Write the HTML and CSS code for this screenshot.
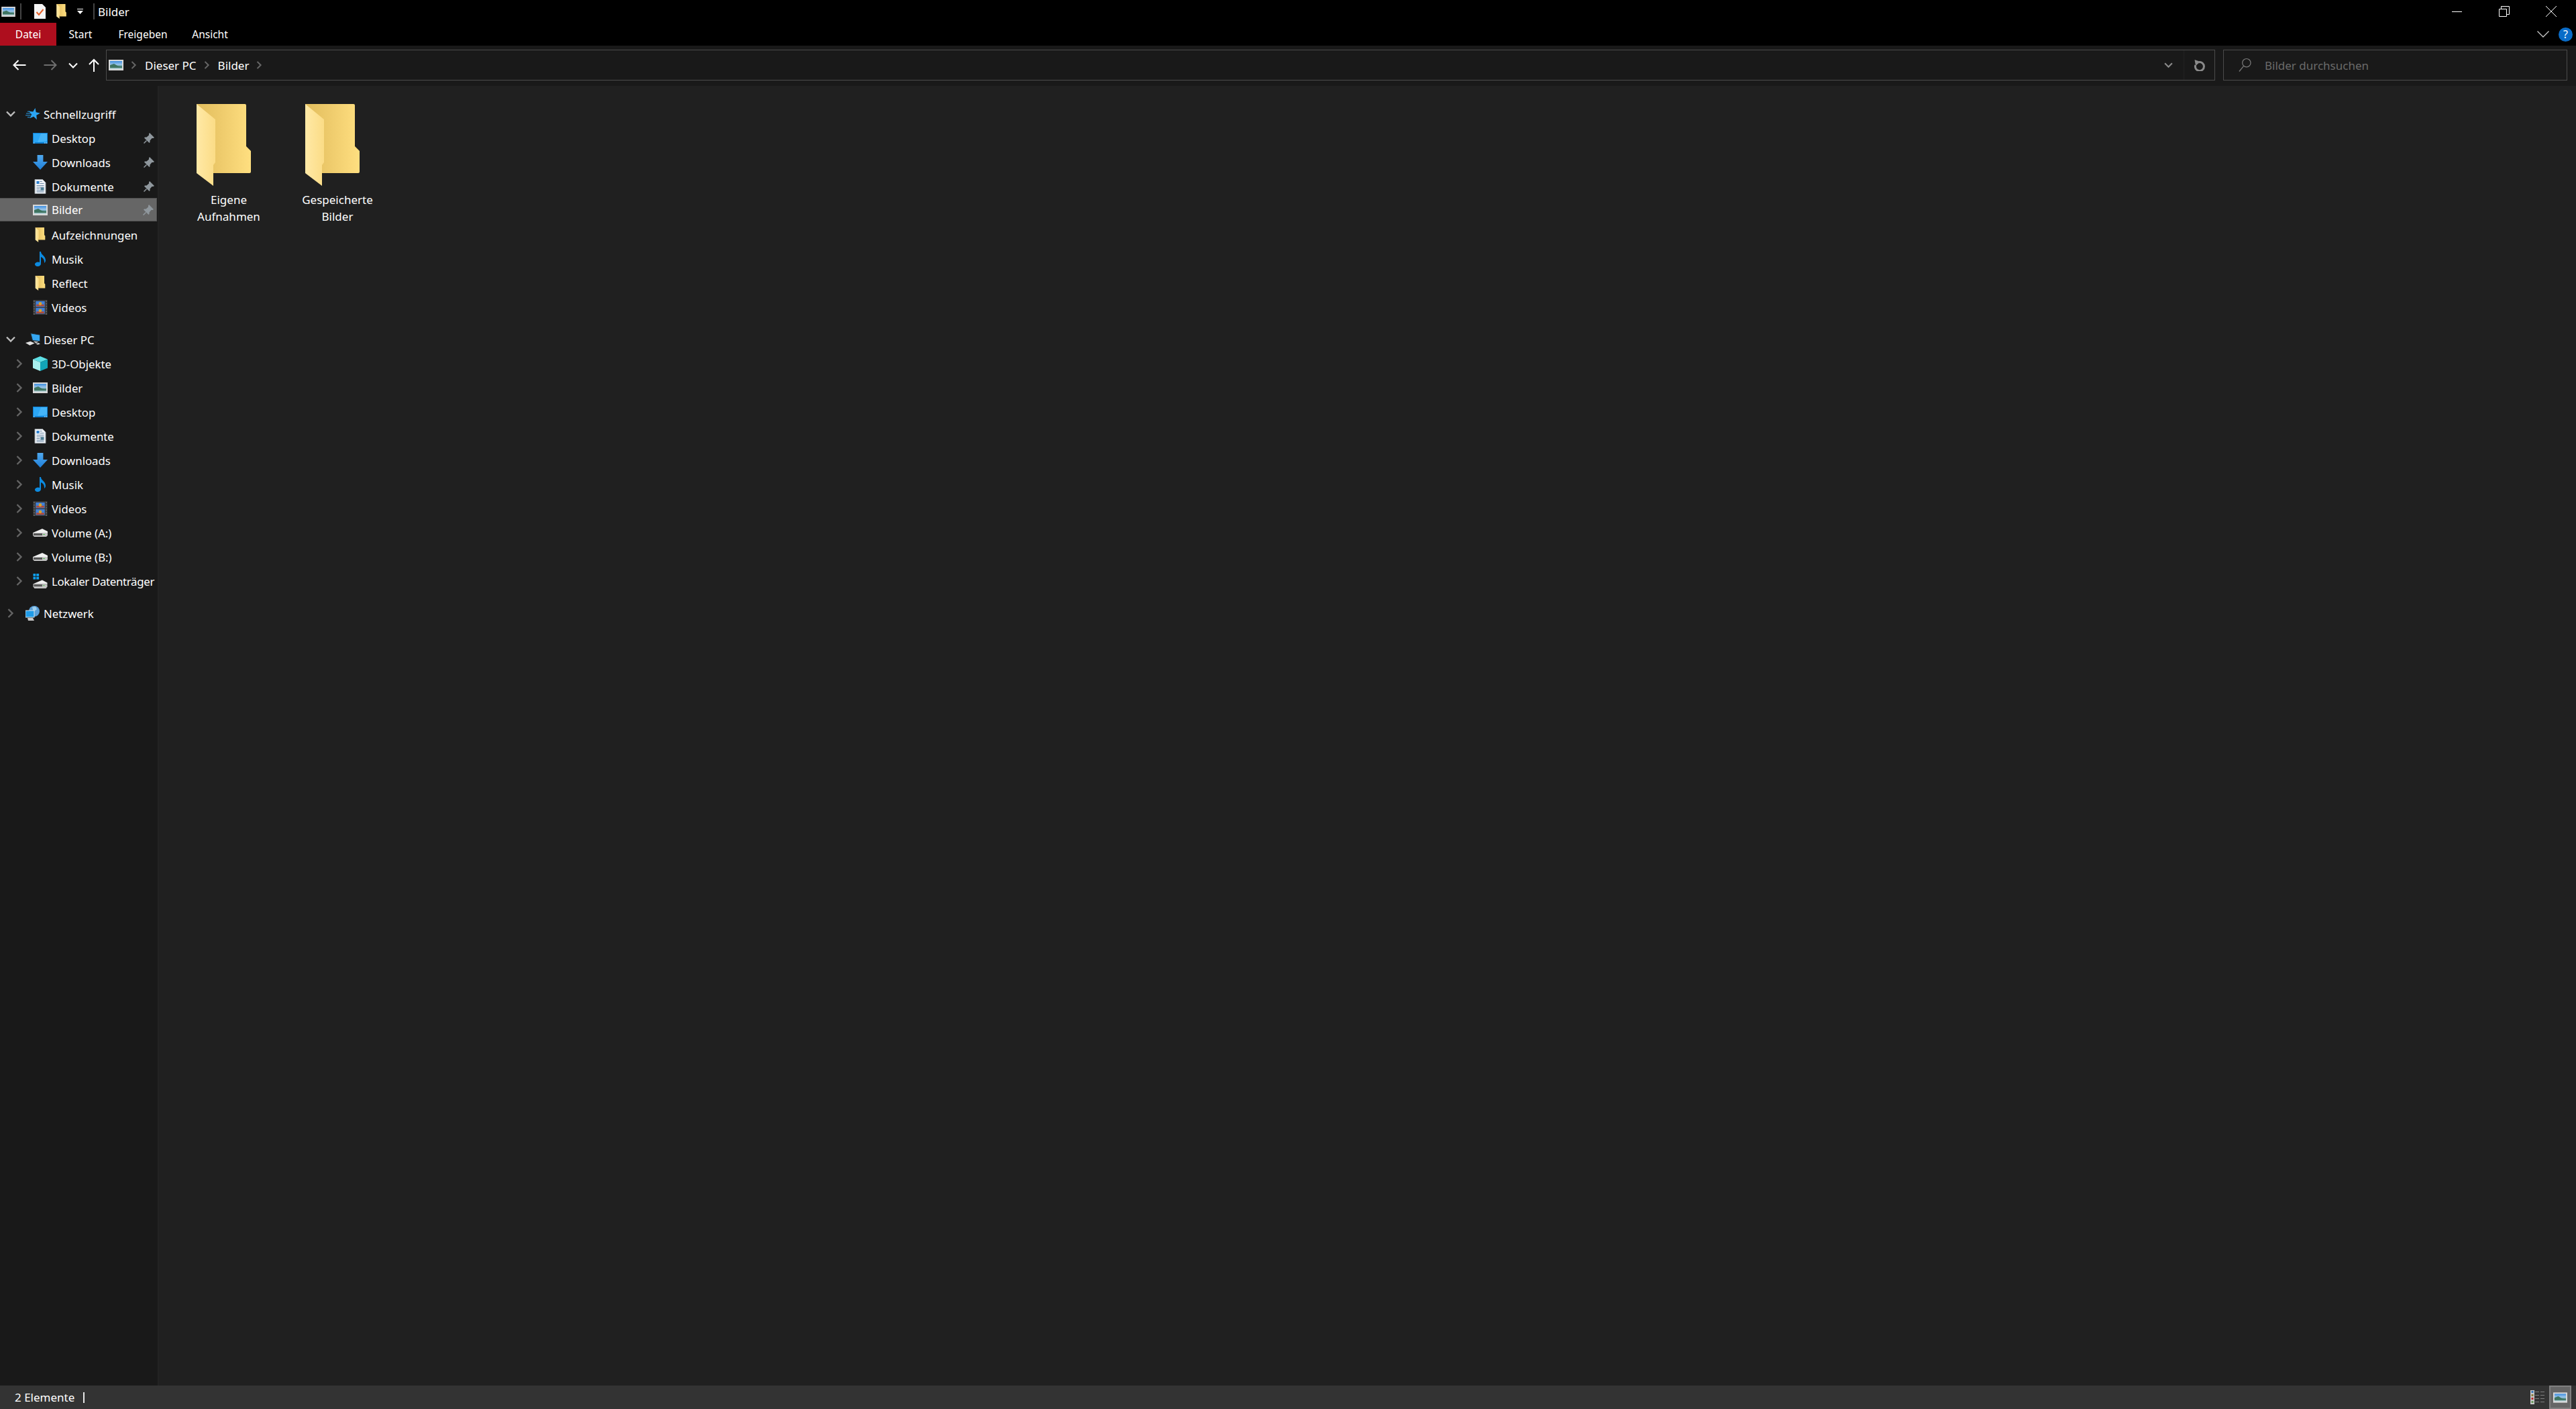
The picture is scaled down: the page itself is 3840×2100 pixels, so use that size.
FILE: index.html
```html
<!DOCTYPE html>
<html lang="de">
<head>
    <meta charset="utf-8">
    <title>Bilder</title>
    <link rel="stylesheet" href="styles.css">
</head>
<body>

<svg class="defs" width="0" height="0">
    <defs>
        <linearGradient id="skyGrad" x1="0" y1="0" x2="0" y2="1">
            <stop offset="0" stop-color="#3f8fe0"/>
            <stop offset="0.45" stop-color="#9cc6ea"/>
            <stop offset="0.7" stop-color="#3f7f72"/>
            <stop offset="1" stop-color="#cfe0ea"/>
        </linearGradient>
        <linearGradient id="backGrad" x1="0" y1="0" x2="1" y2="0">
            <stop offset="0" stop-color="#e2bd5c"/>
            <stop offset="0.45" stop-color="#eecb6c"/>
            <stop offset="1" stop-color="#ffdf80"/>
        </linearGradient>
        <linearGradient id="flapGrad" x1="0" y1="0" x2="1" y2="0">
            <stop offset="0" stop-color="#ffe9a6"/>
            <stop offset="1" stop-color="#fbdc86"/>
        </linearGradient>
        <linearGradient id="dlGrad" x1="0" y1="0" x2="0" y2="1">
            <stop offset="0" stop-color="#4fa8ee"/>
            <stop offset="1" stop-color="#1f7fd8"/>
        </linearGradient>

        <symbol id="i-folder" viewBox="0 0 81 122">
            <path fill="url(#backGrad)" d="M0 0H72a2 2 0 0 1 2 2V63L81 70V101a2 2 0 0 1-2 2H25Z"/>
            <path fill="url(#flapGrad)" d="M0 0L28 23V87L25 91V122L0 103Z"/>
        </symbol>
        <symbol id="i-pics" viewBox="0 0 22 16">
            <rect width="22" height="16" fill="#d8d8d8"/>
            <rect x="2" y="2" width="18" height="12" fill="url(#skyGrad)"/>
            <path fill="#3f7562" d="M2 8L8 6L14 9.500L20 10.500V12H2Z"/>
        </symbol>
        <symbol id="i-desktop" viewBox="0 0 22 16">
            <rect width="22" height="16" fill="#0f7fd0"/>
            <path fill="#2ba6f5" d="M1 1H21V14H1Z"/>
            <path fill="#45b4f8" d="M12 1H21V12L7 14Z"/>
            <rect x="1" y="14.500" width="1.500" height="1" fill="#cfeaff"/>
            <rect x="17" y="14.500" width="1.500" height="1" fill="#cfeaff"/>
            <rect x="19.500" y="14.500" width="1.500" height="1" fill="#cfeaff"/>
        </symbol>
        <symbol id="i-download" viewBox="0 0 20 20">
            <path fill="url(#dlGrad)" d="M6 0H14V9H20L10 20L0 9H6Z"/>
        </symbol>
        <symbol id="i-docs" viewBox="0 0 17 22">
            <path fill="#eef2f6" stroke="#9aa0a6" d="M.5.500H12L16.500 5V21.500H.5Z"/>
            <path fill="#2a7fd0" d="M3 3H7V7H3Z"/>
            <path stroke="#6d8aa8" d="M8 3.500H11M8 6.500H14M3 9.500H14M3 12H14M3 14.500H8M3 17H14M3 19H14"/>
            <rect x="9" y="12.500" width="5" height="4" fill="#4d7f96"/>
        </symbol>
        <symbol id="i-music" viewBox="0 0 16 22">
            <path fill="#0c8adf" d="M7 0H9C9 5 16 6 16 13C16 15 15 16 14 17C14.500 12 12 9 9 8V18C9 20.500 6.500 22 4 22C1.500 22 0 20.500 0 19C0 17 2.500 15.500 5 15.500C6 15.500 6.500 15.700 7 16Z"/>
        </symbol>
        <symbol id="i-video" viewBox="0 0 22 23">
            <rect width="22" height="23" fill="#3a3a3a"/>
            <rect x="4" y="2" width="14" height="9" fill="#3f80d8"/>
            <rect x="4" y="12.500" width="14" height="9" fill="#3f80d8"/>
            <rect x="5" y="7" width="12" height="3" fill="#b04a3a"/>
            <rect x="5" y="18" width="12" height="3" fill="#b04a3a"/>
            <circle cx="11" cy="6" r="2.500" fill="#d9a12c"/>
            <circle cx="11" cy="16.500" r="2.500" fill="#d9a12c"/>
            <path stroke="#888" stroke-dasharray="2 2" d="M1.500 1V23M20.500 1V23"/>
        </symbol>
        <symbol id="i-3d" viewBox="0 0 22 22">
            <path fill="#5fe0e6" d="M11 0L22 4.500L11 9L0 4.500Z"/>
            <path fill="#a8f0ee" d="M0 4.500L11 9V22L0 17.500Z"/>
            <path fill="#12a5b8" d="M22 4.500L11 9V22L22 17.500Z"/>
        </symbol>
        <symbol id="i-drive" viewBox="0 0 22 12">
            <path fill="#f0f0f0" d="M0 6L14 0L22 4V6Z"/>
            <path fill="#c4c4c4" d="M0 6H22V10L20 12H2L0 10Z"/>
            <rect x="1" y="7" width="13" height="3" fill="#555"/>
            <rect x="15" y="8" width="3" height="1" fill="#4fc04f"/>
        </symbol>
        <symbol id="i-star" viewBox="0 0 23 19">
            <path fill="#2ba6f5" d="M15.150 .14L16.380 6.720L22.900 8.180L17.030 11.380L17.660 18.040L12.800 13.440L6.670 16.100L9.540 10.060L5.110 5.040L11.750 5.900Z"/>
            <path stroke="#2ba6f5" d="M3 5.500H7M1 8.500H8M0 11.500H8M3 14.500H7"/>
        </symbol>
        <symbol id="i-pc" viewBox="0 0 24 21">
            <path fill="#35a7f2" stroke="#20343f" d="M8.500 .5L23.500 3V13.500L11.500 12Z"/>
            <path fill="#e0e0e0" d="M0 16L8 13.500L15 16.500L7 20Z"/>
            <path fill="#bdbdbd" d="M13 13L21 14L17 17Z"/>
            <path fill="#d8d8d8" d="M17 17.500L21 16L24 17.500L20 19Z"/>
        </symbol>
        <symbol id="i-net" viewBox="0 0 22 22">
            <circle cx="13" cy="8" r="8" fill="#5a9fd8"/>
            <path fill="#9fd0ee" d="M10 2L15 1L17 5L12 9Z"/>
            <rect x="0" y="7" width="13" height="10" fill="#1f9be8" stroke="#d8e4ec"/>
            <path fill="#c8c8c8" d="M3 18H11L13 22H4Z"/>
        </symbol>
        <symbol id="i-win" viewBox="0 0 22 23">
            <path fill="#0fa0ee" d="M0 0H4V4H0ZM5 0H9V4H5ZM0 5H4V9H0ZM5 5H9V9H5Z"/>
            <path fill="#f0f0f0" d="M0 16L14 10L22 14V16Z"/>
            <path fill="#c4c4c4" d="M0 16H22V20L20 23H2L0 20Z"/>
            <rect x="1" y="17" width="13" height="3" fill="#555"/>
            <rect x="15" y="18" width="3" height="1" fill="#4fc04f"/>
        </symbol>
        <symbol id="i-pin" viewBox="0 0 16 16">
            <path fill="#8f979d" d="M9 0L16 7L14.500 8H12.500L9.500 11.500V14L8.500 15L1 7.500L2 6.500H4.500L8 3.500V1.500Z"/>
            <path stroke="#8f979d" stroke-width="1.500" d="M4.500 11.500L.5 15.500"/>
        </symbol>
        <symbol id="i-open" viewBox="0 0 14 10">
            <path fill="none" stroke="currentColor" stroke-width="2.400" d="M1 1.500L7 7.500L13 1.500"/>
        </symbol>
        <symbol id="i-closed" viewBox="0 0 10 14">
            <path fill="none" stroke="currentColor" stroke-width="2.400" d="M1.500 1L7.500 7L1.500 13"/>
        </symbol>
    </defs>
</svg>

<div class="titlebar">
    <svg class="qa-pic"><use href="#i-pics"/></svg>
    <span class="qa-sep"></span>
    <svg class="qa-note" viewBox="0 0 17 22">
        <path fill="#f4f4f4" d="M0 0H12L17 5V22H0Z"/>
        <path fill="none" stroke="#e8622a" stroke-width="2" d="M3.500 12L7 16L13.500 8"/>
    </svg>
    <svg class="qa-folder"><use href="#i-folder"/></svg>
    <svg class="qa-drop" viewBox="0 0 9 8">
        <path fill="#fff" d="M0 0H9V1H0ZM0 3H9L4.500 8Z"/>
    </svg>
    <span class="qa-sep qa-sep2"></span>
    <span class="win-title">Bilder</span>
    <div class="win-controls">
        <svg class="win-btn" viewBox="0 0 16 16"><path stroke="#fff" stroke-width="1" d="M0 8.500H15"/></svg>
        <svg class="win-btn" viewBox="0 0 16 16"><path fill="none" stroke="#fff" d="M.5 4.500H11.500V15.500H.5ZM3.500 4.500V.5H15.500V12.500H11.500"/></svg>
        <svg class="win-btn" viewBox="0 0 16 16"><path stroke="#fff" d="M0 0L16 16M16 0L0 16"/></svg>
    </div>
</div>

<div class="ribbon">
    <a class="tab tab-file">Datei</a>
    <a class="tab tab-start">Start</a>
    <a class="tab tab-share">Freigeben</a>
    <a class="tab tab-view">Ansicht</a>
    <div class="ribbon-right">
        <svg class="rib-chev" viewBox="0 0 18 10"><path fill="none" stroke="#c8c8c8" stroke-width="1.300" d="M.5.5L9 9L17.500.5"/></svg>
        <span class="help">?</span>
    </div>
</div>

<div class="addressbar">
    <div class="nav-btns">
        <svg class="nav-arrow" viewBox="0 0 20 16"><path fill="none" stroke="#fff" stroke-width="2" d="M19.500 8H2M8.500 1L1.500 8L8.500 15"/></svg>
        <svg class="nav-arrow nav-fwd" viewBox="0 0 20 16"><path fill="none" stroke="#6e6e6e" stroke-width="2" d="M.5 8H18M11.500 1L18.500 8L11.500 15"/></svg>
        <svg class="nav-down" viewBox="0 0 14 9"><path fill="none" stroke="#fff" stroke-width="2" d="M1 1.500L7 7.500L13 1.500"/></svg>
        <svg class="nav-up" viewBox="0 0 16 20"><path fill="none" stroke="#fff" stroke-width="2" d="M8 20V2M1 9L8 2L15 9"/></svg>
    </div>
    <div class="crumbs">
        <svg class="crumb-pic"><use href="#i-pics"/></svg>
        <svg class="crumb-sep"><use href="#i-closed"/></svg>
        <span class="crumb">Dieser PC</span>
        <svg class="crumb-sep"><use href="#i-closed"/></svg>
        <span class="crumb">Bilder</span>
        <svg class="crumb-sep"><use href="#i-closed"/></svg>
        <svg class="crumb-drop"><use href="#i-open"/></svg>
        <div class="refresh">
            <svg viewBox="0 0 18 17"><path fill="none" stroke="#8a8a8a" stroke-width="3" d="M8 3.700A6.500 6.500 0 1 1 2.800 8"/><path fill="#8a8a8a" d="M1.500 0L10 3L3 9Z"/></svg>
        </div>
    </div>
    <div class="search">
        <svg viewBox="0 0 20 22"><circle cx="12.500" cy="7.500" r="6.500" fill="none" stroke="#7a7a7a" stroke-width="1.300"/><path stroke="#7a7a7a" stroke-width="1.300" d="M8 12.500L1 21"/></svg>
        <span>Bilder durchsuchen</span>
    </div>
</div>

<div class="main">
    <div class="navpane">
        <div class="group">
            <div class="row top"><svg class="exp open"><use href="#i-open"/></svg><svg class="ico"><use href="#i-star"/></svg><span>Schnellzugriff</span></div>
            <div class="row"><span class="noexp"></span><svg class="ico"><use href="#i-desktop"/></svg><span>Desktop</span><svg class="pin"><use href="#i-pin"/></svg></div>
            <div class="row"><span class="noexp"></span><svg class="ico"><use href="#i-download"/></svg><span>Downloads</span><svg class="pin"><use href="#i-pin"/></svg></div>
            <div class="row"><span class="noexp"></span><svg class="ico"><use href="#i-docs"/></svg><span>Dokumente</span><svg class="pin"><use href="#i-pin"/></svg></div>
            <div class="row selected"><span class="noexp"></span><svg class="ico"><use href="#i-pics"/></svg><span>Bilder</span><svg class="pin"><use href="#i-pin"/></svg></div>
            <div class="row"><span class="noexp"></span><svg class="ico"><use href="#i-folder"/></svg><span>Aufzeichnungen</span></div>
            <div class="row"><span class="noexp"></span><svg class="ico"><use href="#i-music"/></svg><span>Musik</span></div>
            <div class="row"><span class="noexp"></span><svg class="ico"><use href="#i-folder"/></svg><span>Reflect</span></div>
            <div class="row"><span class="noexp"></span><svg class="ico"><use href="#i-video"/></svg><span>Videos</span></div>
        </div>
        <div class="group">
            <div class="row top"><svg class="exp open"><use href="#i-open"/></svg><svg class="ico"><use href="#i-pc"/></svg><span>Dieser PC</span></div>
            <div class="row"><svg class="exp"><use href="#i-closed"/></svg><svg class="ico"><use href="#i-3d"/></svg><span>3D-Objekte</span></div>
            <div class="row"><svg class="exp"><use href="#i-closed"/></svg><svg class="ico"><use href="#i-pics"/></svg><span>Bilder</span></div>
            <div class="row"><svg class="exp"><use href="#i-closed"/></svg><svg class="ico"><use href="#i-desktop"/></svg><span>Desktop</span></div>
            <div class="row"><svg class="exp"><use href="#i-closed"/></svg><svg class="ico"><use href="#i-docs"/></svg><span>Dokumente</span></div>
            <div class="row"><svg class="exp"><use href="#i-closed"/></svg><svg class="ico"><use href="#i-download"/></svg><span>Downloads</span></div>
            <div class="row"><svg class="exp"><use href="#i-closed"/></svg><svg class="ico"><use href="#i-music"/></svg><span>Musik</span></div>
            <div class="row"><svg class="exp"><use href="#i-closed"/></svg><svg class="ico"><use href="#i-video"/></svg><span>Videos</span></div>
            <div class="row"><svg class="exp"><use href="#i-closed"/></svg><svg class="ico"><use href="#i-drive"/></svg><span>Volume (A:)</span></div>
            <div class="row"><svg class="exp"><use href="#i-closed"/></svg><svg class="ico"><use href="#i-drive"/></svg><span>Volume (B:)</span></div>
            <div class="row"><svg class="exp"><use href="#i-closed"/></svg><svg class="ico"><use href="#i-win"/></svg><span class="tight">Lokaler Datenträger</span></div>
        </div>
        <div class="group">
            <div class="row top"><svg class="exp"><use href="#i-closed"/></svg><svg class="ico"><use href="#i-net"/></svg><span>Netzwerk</span></div>
        </div>
    </div>
    <div class="content">
        <div class="tile">
            <svg class="tile-ico"><use href="#i-folder"/></svg>
            <span>Eigene<br>Aufnahmen</span>
        </div>
        <div class="tile">
            <svg class="tile-ico"><use href="#i-folder"/></svg>
            <span>Gespeicherte<br>Bilder</span>
        </div>
    </div>
</div>

<div class="statusbar">
    <span class="count">2 Elemente</span>
    <span class="status-sep"></span>
    <div class="views">
        <svg class="view-details" viewBox="0 0 21 21">
            <rect width="6" height="21" fill="#c8c8c8"/>
            <rect x="1.500" y="1" width="3" height="3" fill="#3a78b8"/>
            <rect x="1.500" y="6" width="3" height="3" fill="#8a7a3a"/>
            <rect x="1.500" y="11" width="3" height="3" fill="#b82a2a"/>
            <rect x="1.500" y="16" width="3" height="3" fill="#6a9a5a"/>
            <path stroke="#7f7f7f" d="M7 2.500H13M15 2.500H21M7 7.500H13M15 7.500H21M7 12.500H13M15 12.500H21M7 17.500H13M15 17.500H21"/>
        </svg>
        <div class="view-thumb"><svg><use href="#i-pics"/></svg></div>
    </div>
</div>

</body>
</html>
```

FILE: styles.css
```css
* {
    margin: 0;
    padding: 0;
    box-sizing: border-box;
}
html, body {
    height: 100%;
}
body {
    display: flex;
    flex-direction: column;
    background: #202020;
    color: #fff;
    font-family: "Noto Sans", sans-serif;
    font-size: 17px;
    overflow: hidden;
}
svg {
    display: block;
    flex: none;
}
.defs {
    position: absolute;
}

/* title bar */
.titlebar {
    display: flex;
    align-items: center;
    height: 34px;
    background: #000;
    padding-left: 2px;
}
.qa-pic {
    width: 21px;
    height: 15px;
}
.qa-sep {
    width: 2px;
    height: 24px;
    background: #444;
    margin-left: 7px;
}
.qa-note {
    width: 17px;
    height: 22px;
    margin-left: 19px;
}
.qa-folder {
    width: 15px;
    height: 22px;
    margin-left: 16px;
}
.qa-drop {
    width: 9px;
    height: 8px;
    margin-left: 16px;
}
.qa-sep2 {
    margin-left: 15px;
}
.win-title {
    margin-left: 5px;
}
.win-controls {
    display: flex;
    gap: 54px;
    margin-left: auto;
    padding-right: 29px;
}
.win-btn {
    width: 16px;
    height: 16px;
}

/* ribbon tabs */
.ribbon {
    display: flex;
    align-items: center;
    height: 34px;
    background: #000;
    font-size: 15.500px;
}
.tab {
    display: flex;
    align-items: center;
    justify-content: center;
    height: 100%;
}
.tab-file {
    width: 84px;
    background: #ae0e1e;
}
.tab-start {
    width: 72px;
}
.tab-share {
    width: 114px;
}
.tab-view {
    width: 86px;
}
.ribbon-right {
    display: flex;
    align-items: center;
    margin-left: auto;
    padding-right: 5px;
}
.rib-chev {
    width: 18px;
    height: 10px;
}
.help {
    display: flex;
    align-items: center;
    justify-content: center;
    width: 21px;
    height: 21px;
    margin-left: 14px;
    border-radius: 50%;
    background: #0a6cc8;
    font-size: 16px;
}

/* address bar */
.addressbar {
    display: flex;
    align-items: center;
    height: 60px;
    background: #191919;
    padding: 0 13px 2px 0;
}
.nav-btns {
    display: flex;
    align-items: center;
    width: 158px;
    padding-left: 19px;
}
.nav-arrow {
    width: 20px;
    height: 16px;
}
.nav-fwd {
    margin-left: 26px;
}
.nav-down {
    width: 14px;
    height: 9px;
    margin-left: 17px;
}
.nav-up {
    width: 16px;
    height: 20px;
    margin-left: 16px;
}
.crumbs {
    display: flex;
    align-items: center;
    flex: 1;
    height: 46px;
    border: 1px solid #4b4b4b;
    padding-left: 3px;
}
.crumb-pic {
    width: 22px;
    height: 16px;
}
.crumb-sep {
    width: 9px;
    height: 12px;
    margin: 0 12px 0 11px;
    color: #666;
}
.crumb-drop {
    width: 13px;
    height: 9px;
    margin-left: auto;
    color: #8a8a8a;
}
.refresh {
    display: flex;
    align-items: center;
    justify-content: center;
    width: 46px;
    height: 100%;
    margin-left: 16px;
    border-left: 1px solid #222;
}
.refresh svg {
    width: 18px;
    height: 17px;
}
.search {
    display: flex;
    align-items: center;
    width: 513px;
    height: 46px;
    margin-left: 12px;
    border: 1px solid #4b4b4b;
    padding-left: 22px;
    color: #6a6a6a;
}
.search svg {
    width: 19px;
    height: 22px;
    margin-right: 20px;
}

/* nav pane + content */
.main {
    display: flex;
    flex: 1;
    min-height: 0;
}
.navpane {
    width: 237px;
    padding-top: 24px;
    background: #191919;
    border-right: 2px solid #232323;
    font-size: 16.800px;
    white-space: nowrap;
}
.group {
    margin-bottom: 12px;
}
.row {
    display: flex;
    align-items: center;
    height: 36px;
    padding-left: 20px;
}
.row.top {
    padding-left: 7px;
}
.row.selected {
    height: 35px;
    margin: -1px 1px 2px 0;
    background: #666;
    border: 1px solid #505050;
    border-left-width: 0;
}
.exp, .noexp {
    width: 10px;
    height: 14px;
    margin: 0 15px 0 4px;
    color: #646464;
}
.top .exp {
    margin-right: 17px;
}
.exp.open {
    width: 14px;
    height: 10px;
    margin: 0 15px 0 2px;
    color: #bdbdbd;
}
.ico {
    width: 22px;
    height: 22px;
    margin-right: 6px;
}
.top .ico {
    margin-right: 5px;
}
.tight {
    letter-spacing: -.3px;
}
.pin {
    width: 16px;
    height: 16px;
    margin-left: auto;
    margin-right: 5px;
}
.selected .pin {
    margin-right: 4px;
}
.content {
    display: flex;
    align-items: flex-start;
    flex: 1;
    padding: 27px 0 0 23px;
}
.tile {
    display: flex;
    flex-direction: column;
    width: 162px;
    align-items: center;
    text-align: center;
    line-height: 25px;
}
.tile-ico {
    width: 81px;
    height: 122px;
    margin: 0 15px 8px 0;
}
.tile span {
    display: block;
}

/* status bar */
.statusbar {
    display: flex;
    align-items: center;
    height: 35px;
    background: #333;
    padding-left: 22px;
}
.status-sep {
    width: 2px;
    height: 16px;
    background: #e6e6e6;
    margin-left: 13px;
}
.views {
    display: flex;
    align-items: center;
    height: 100%;
    margin-left: auto;
    padding-right: 7px;
}
.view-details {
    width: 21px;
    height: 21px;
    margin-right: 7px;
}
.view-thumb {
    display: flex;
    align-items: center;
    justify-content: center;
    width: 33px;
    height: 100%;
    background: #666;
    border: 2px solid #808080;
}
.view-thumb svg {
    width: 21px;
    height: 16px;
}
```
